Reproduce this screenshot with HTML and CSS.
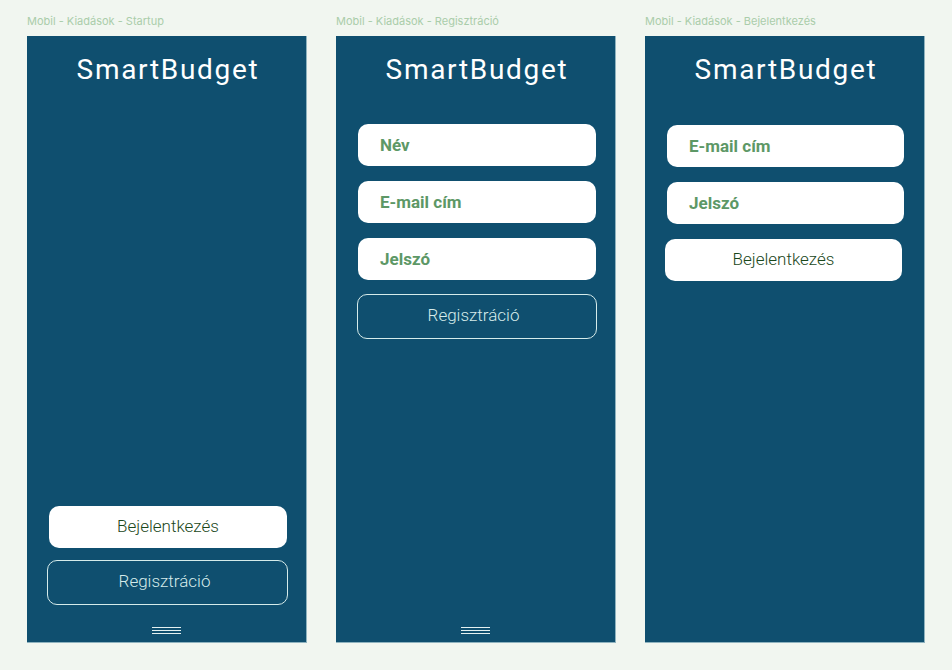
FILE: index.html
```html
<!DOCTYPE html>
<html lang="hu">
<head>
<meta charset="utf-8">
<title>SmartBudget</title>
<link rel="stylesheet" href="styles.css">
</head>
<body>
<div class="board">
  <section class="col">
    <div class="label">Mobil - Kiadások - Startup</div>
    <div class="frame">
      <h1 class="title">SmartBudget</h1>
      <div class="bottom-actions">
        <button class="btn btn-solid btn-start">Bejelentkezés</button>
        <button class="btn btn-outline btn-start-out">Regisztráció</button>
      </div>
      <div class="handle"><span></span><span></span><span></span></div>
    </div>
  </section>
  <section class="col">
    <div class="label">Mobil - Kiadások - Regisztráció</div>
    <div class="frame">
      <h1 class="title">SmartBudget</h1>
      <div class="form form-reg">
        <div class="field">Név</div>
        <div class="field">E-mail cím</div>
        <div class="field">Jelszó</div>
        <button class="btn btn-outline btn-reg">Regisztráció</button>
      </div>
      <div class="handle handle-push"><span></span><span></span><span></span></div>
    </div>
  </section>
  <section class="col">
    <div class="label">Mobil - Kiadások - Bejelentkezés</div>
    <div class="frame">
      <h1 class="title">SmartBudget</h1>
      <div class="form form-login">
        <div class="field">E-mail cím</div>
        <div class="field">Jelszó</div>
        <button class="btn btn-solid btn-login">Bejelentkezés</button>
      </div>
    </div>
  </section>
</div>
</body>
</html>
```

FILE: styles.css
```css
* { box-sizing: border-box; }
html, body { margin: 0; padding: 0; }
body {
  background: #f1f6f0;
  width: 952px;
  height: 670px;
  overflow: hidden;
  font-family: Roboto, "Liberation Sans", sans-serif;
}
.board {
  display: flex;
  gap: 29px;
  padding: 14px 0 0 27px;
}
.col {
  width: 280px;
  display: flex;
  flex-direction: column;
}
.label {
  font-family: Inter, "Liberation Sans", sans-serif;
  font-size: 11px;
  line-height: 14px;
  color: #aacdaa;
  height: 22px;
}
.frame {
  height: 607px;
  background: #0f4f6f;
  border-right: 1px solid #8fb3bf;
  border-bottom: 1px solid #8fb3bf;
  display: flex;
  flex-direction: column;
}
.title {
  margin: 17px 0 0;
  padding-left: 3px;
  text-align: center;
  font-weight: 400;
  font-size: 28px;
  line-height: 34px;
  letter-spacing: 1.7px;
  color: #ffffff;
}
.btn {
  font-family: Roboto, "Liberation Sans", sans-serif;
  font-weight: 300;
  font-size: 17px;
  border-radius: 10px;
  display: block;
  padding: 0;
  cursor: pointer;
}
.btn-solid {
  background: #ffffff;
  border: 0;
  color: #1a471a;
  height: 42px;
  padding-bottom: 2px;
}
.btn-outline {
  background: transparent;
  border: 1.5px solid #d5ebea;
  color: #d5ebea;
  height: 45px;
  padding-bottom: 3px;
}
.bottom-actions {
  margin-top: auto;
  display: flex;
  flex-direction: column;
  gap: 12px;
  padding: 0 19px 0 20px;
}
.btn-start { width: 238px; margin-left: 2px; }
.btn-start-out { width: 241px; padding-right: 6px; }
.handle {
  margin: 22px auto 8px;
  width: 29px;
  display: flex;
  flex-direction: column;
  gap: 2px;
}
.handle span {
  display: block;
  height: 1px;
  background: #e4f1f1;
}
.handle-push { margin-top: auto; }
.form {
  display: flex;
  flex-direction: column;
  gap: 15px;
}
.form-reg { padding: 37px 0 0 21px; }
.form-login { padding: 38px 0 0 20px; }
.field {
  width: 238px;
  height: 42px;
  margin-left: 1px;
  background: #ffffff;
  border-radius: 10px;
  color: #5d9866;
  font-weight: 700;
  font-size: 17px;
  line-height: 42px;
  padding-left: 22px;
}
.form-login .field { margin-left: 2px; width: 237px; }
.btn-reg { width: 240px; margin-top: -1px; padding-right: 7px; }
.btn-login { width: 237px; }
```
